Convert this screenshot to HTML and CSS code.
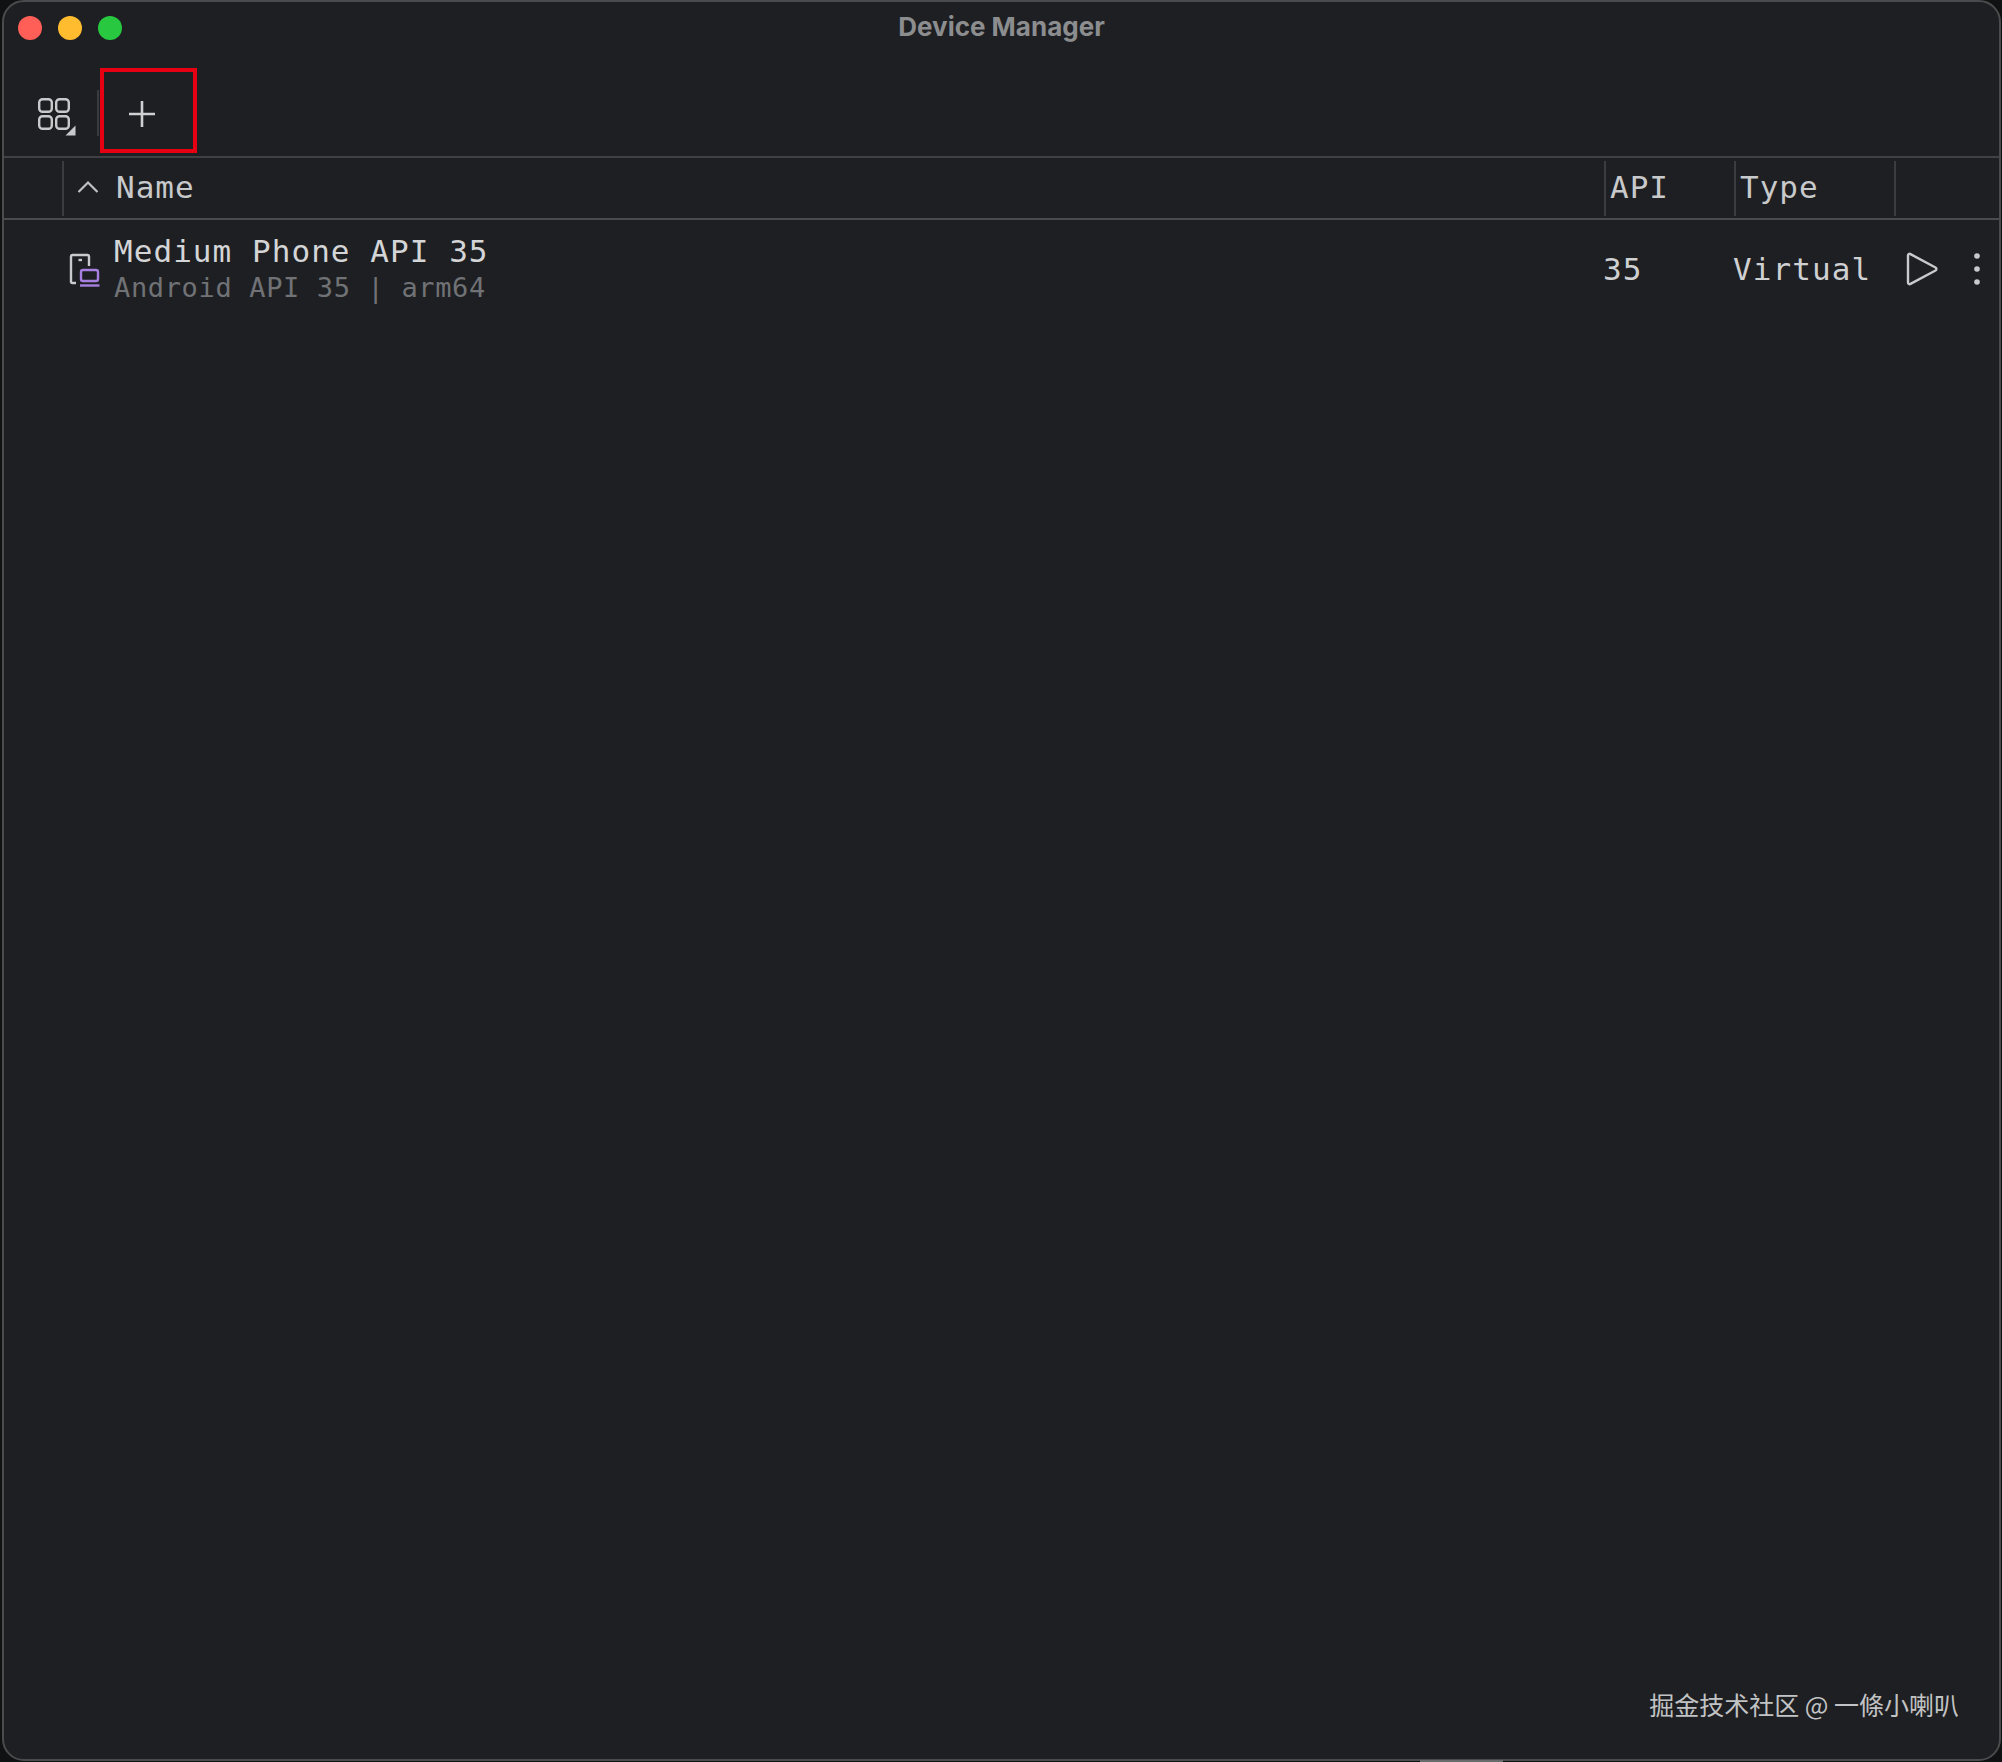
FILE: index.html
```html
<!DOCTYPE html>
<html lang="en">
<head>
<meta charset="utf-8">
<title>Device Manager</title>
<link rel="stylesheet" href="styles.css">
</head>
<body>
<div class="window">
  <header class="titlebar">
    <div class="lights">
      <span class="light red"></span>
      <span class="light yellow"></span>
      <span class="light green"></span>
    </div>
    <div class="title">Device Manager</div>
  </header>
  <div class="toolbar">
    <button class="tool grid-tool" aria-label="Group">
      <svg width="42" height="42" viewBox="0 0 42 42" fill="none" stroke="#c8c9cb" stroke-width="2.4">
        <rect x="2.2" y="2.2" width="12.6" height="12.6" rx="3.4"/>
        <rect x="19.2" y="2.2" width="12.6" height="12.6" rx="3.4"/>
        <rect x="2.2" y="19.2" width="12.6" height="12.6" rx="3.4"/>
        <rect x="19.2" y="19.2" width="12.6" height="12.6" rx="3.4"/>
        <path d="M38.500 28.500V38.500H28.500Z" fill="#c8c9cb" stroke="none"/>
      </svg>
    </button>
    <span class="tool-sep"></span>
    <button class="tool add-tool" aria-label="Add">
      <svg width="28" height="28" viewBox="0 0 28 28" fill="none" stroke="#cfd0d2" stroke-width="2.6">
        <path d="M14 1V27M1 14H27"/>
      </svg>
    </button>
    <span class="annotation"></span>
  </div>
  <div class="table-head">
    <div class="cell-gutter"></div>
    <div class="head-cell head-name">
      <svg class="chevron" width="22" height="14" viewBox="0 0 22 14" fill="none" stroke="#bfc0c2" stroke-width="2.200">
        <path d="M1.500 12L11 2.500L20.500 12"/>
      </svg>
      <span>Name</span>
    </div>
    <div class="head-cell">API</div>
    <div class="head-cell">Type</div>
    <div class="head-cell head-last"></div>
  </div>
  <div class="device-row">
    <div class="device-gutter"></div>
    <div class="device-main">
      <svg class="device-icon" width="32" height="34" viewBox="0 0 32 34" fill="none" stroke-width="2.400">
        <path d="M7 30H3.500A1.500 1.500 0 0 1 2 28.500V3.500A1.500 1.500 0 0 1 3.500 2H18.500A1.500 1.500 0 0 1 20 3.500V13" stroke="#c9cacc"/>
        <path d="M9.500 7H13" stroke="#c9cacc"/>
        <rect x="12" y="17" width="17" height="11" rx="2" stroke="#a67fe0"/>
        <path d="M11 32.500H30.500" stroke="#a67fe0"/>
      </svg>
      <div class="device-text">
        <div class="device-name">Medium Phone API 35</div>
        <div class="device-sub">Android API 35 | arm64</div>
      </div>
    </div>
    <div class="device-value">35</div>
    <div class="device-value">Virtual</div>
    <div class="device-actions">
      <svg width="32" height="34" viewBox="0 0 32 34" fill="none" stroke="#c9cacc" stroke-width="2.400" stroke-linejoin="round">
        <path d="M2 3.500C2 2 3.200 1.400 4.500 2.100L29.500 15.500C30.700 16.200 30.700 17.800 29.500 18.500L4.500 31.900C3.200 32.600 2 32 2 30.500Z"/>
      </svg>
      <svg width="8" height="34" viewBox="0 0 8 34" fill="#c9cacc">
        <circle cx="4" cy="4" r="2.800"/>
        <circle cx="4" cy="17" r="2.800"/>
        <circle cx="4" cy="30" r="2.800"/>
      </svg>
    </div>
  </div>
  <div class="watermark">掘金技术社区 @ 一條小喇叭</div>
</div>
<div class="edge-sliver"></div>
</body>
</html>
```
FILE: styles.css
```css
* { box-sizing: border-box; }
html, body { margin: 0; padding: 0; background: #101113; }
body { position: relative; width: 2002px; height: 1762px; overflow: hidden; }
.window {
  position: relative;
  width: 1999px;
  height: 1761px;
  margin-left: 2px;
  border: 2px solid #4a4b4d;
  border-radius: 22px;
  background: #1e1f22;
  display: flex;
  flex-direction: column;
  overflow: hidden;
}
.edge-sliver {
  position: absolute;
  left: 1420px;
  top: 1760px;
  width: 83px;
  height: 2px;
  background: #6a6b6d;
}
.titlebar {
  position: relative;
  height: 52px;
  flex: none;
  display: flex;
  align-items: center;
  justify-content: center;
}
.lights {
  position: absolute;
  left: 14px;
  top: 14px;
  display: flex;
  gap: 16px;
}
.light { width: 24px; height: 24px; border-radius: 50%; }
.red { background: #ff5f57; }
.yellow { background: #febc2e; }
.green { background: #28c840; }
.title {
  font: 700 26px/1 Inter, "Liberation Sans", sans-serif;
  color: #8c8d8f;
  margin-top: -2px;
}
.toolbar {
  position: relative;
  height: 104px;
  flex: none;
  display: flex;
  align-items: center;
  padding: 0 0 0 33px;
  border-bottom: 2px solid #404144;
}
.tool {
  display: flex;
  padding: 0;
  border: 0;
  background: none;
}
.grid-tool { margin-top: 26px; }
.tool-sep {
  width: 2px;
  height: 46px;
  background: #3b3c3f;
  margin: 16px 0 0 18px;
}
.add-tool { margin: 18px 0 0 29px; }
.annotation {
  position: absolute;
  left: 96px;
  top: 14px;
  width: 97px;
  height: 85px;
  border: 4px solid #e60012;
}
.table-head, .device-row {
  display: grid;
  grid-template-columns: 58px 1542px 130px 160px 1fr;
  flex: none;
  font-family: "DejaVu Sans Mono", "Liberation Mono", monospace;
}
.table-head {
  height: 62px;
  padding: 3px 0 2px;
  border-bottom: 2px solid #4a4b4d;
  font-size: 31px;
  letter-spacing: 1px;
  color: #c8c9cb;
}
.head-cell {
  display: flex;
  align-items: center;
  padding-left: 4px;
  padding-bottom: 4px;
  border-left: 2px solid #3b3c3f;
}
.head-name { gap: 17px; padding-left: 13px; }
.chevron { margin-top: 1px; }
.device-row {
  height: 98px;
  align-items: center;
  color: #cfd0d2;
}
.device-main {
  display: flex;
  align-items: center;
  gap: 14px;
  margin-left: -1px;
  margin-top: 2px;
  padding-left: 8px;
}
.device-text { display: flex; flex-direction: column; margin-top: -2px; margin-left: -1px; }
.device-name {
  font-size: 31px;
  line-height: 38px;
  letter-spacing: 1.050px;
  color: #d4d5d7;
}
.device-sub {
  font-size: 27px;
  line-height: 36px;
  letter-spacing: 0.650px;
  color: #707276;
}
.device-value {
  font-size: 31px;
  letter-spacing: 1.100px;
  margin-left: -1px;
}
.device-actions {
  display: flex;
  align-items: center;
  gap: 35px;
  padding-left: 13px;
  margin-left: -1px;
}
.watermark {
  position: absolute;
  right: 40px;
  bottom: 39px;
  font: 400 25px/32px "Noto Sans CJK SC", "Liberation Sans", sans-serif;
  color: #c2c3c4;
}
```
